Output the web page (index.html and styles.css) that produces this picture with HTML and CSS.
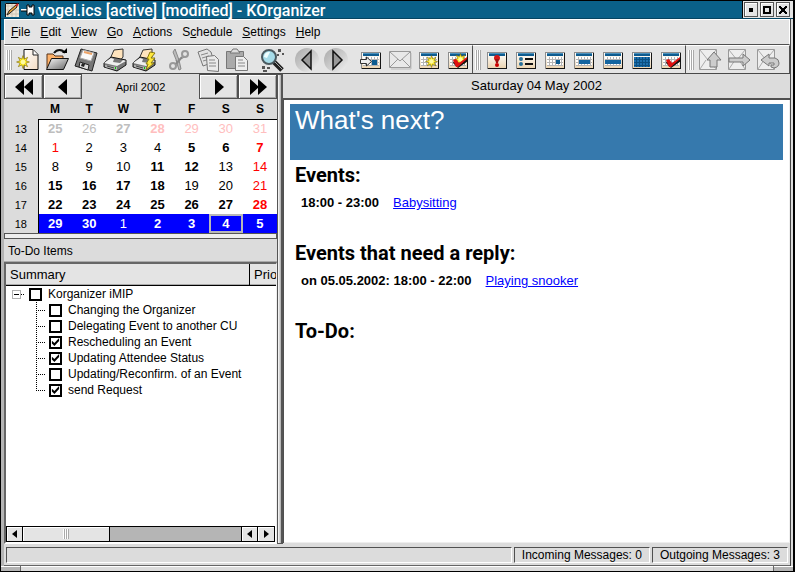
FILE: index.html
```html
<!DOCTYPE html>
<html lang="en">
<head>
<meta charset="utf-8">
<title>vogel.ics [active] [modified] - KOrganizer</title>
<link rel="stylesheet" href="styles.css">
</head>
<body>
<svg class="defs" aria-hidden="true">
  <defs>
    <linearGradient id="paper" x1="0" y1="0" x2="1" y2="1"><stop offset="0" stop-color="#fff"/><stop offset="1" stop-color="#f3dcc4"/></linearGradient>
    <linearGradient id="metal" x1="0" y1="0" x2="1" y2="1"><stop offset="0" stop-color="#f8f8f8"/><stop offset="1" stop-color="#666"/></linearGradient>
    <linearGradient id="disc" x1="0" y1="0" x2="1" y2="1"><stop offset="0" stop-color="#a9a9a9"/><stop offset=".6" stop-color="#d2d2d2"/><stop offset="1" stop-color="#f4f4f4"/></linearGradient>
    <linearGradient id="beige" x1="0" y1="0" x2="0" y2="1"><stop offset="0" stop-color="#fff"/><stop offset="1" stop-color="#ecd5b2"/></linearGradient>
    <pattern id="cells" width="3" height="3" patternUnits="userSpaceOnUse" x="4" y="9"><rect width="3" height="3" fill="#b5b5b5"/><rect width="2" height="2" fill="#fff"/></pattern>
    <pattern id="bluecells" width="3" height="3" patternUnits="userSpaceOnUse" x="4" y="9"><rect width="3" height="3" fill="#0b4f80"/><rect width="2" height="2" fill="#1c70ae"/></pattern>
    <symbol id="card" viewBox="0 0 24 24">
      <path d="M2 4h20v17H2z" fill="#8d8d8d"/><path d="M3 21V20h18V5h1v16z" fill="#151515"/>
      <path d="M3 5h18v15H3z" fill="url(#beige)"/><path d="M4 5h16v3H4z" fill="#0e5c90"/><path d="M4 5h16v1H4z" fill="#4b91bd"/>
    </symbol>
    <symbol id="cal" viewBox="0 0 24 24"><use href="#card"/><path d="M4 9h16v9H4z" fill="url(#cells)"/></symbol>
    <symbol id="tick" viewBox="0 0 24 24"><path d="M8 13l4 5 10-9v4L12 20l-5-5z" fill="#111"/><path d="M7 12l3-1 3 4 8-6v2l-9 8h-2z" fill="#df1010"/></symbol>
    <symbol id="star" viewBox="0 0 24 24"><path d="M12 1l2 6 6-3-3 6 6 2-6 2 3 6-6-3-2 6-2-6-6 3 3-6-6-2 6-2-3-6 6 3z" fill="#ffec28" stroke="#776300" stroke-width="1"/><circle cx="12" cy="12" r="4" fill="#fffba0"/></symbol>
    <symbol id="printer" viewBox="0 0 24 24">
      <path d="M7 11l4-9 9-1v8l-4 5z" fill="#ffe4bd" stroke="#333"/><path d="M1 15l7-6 15 3v5l-9 6-13-4z" fill="#777" stroke="#161616"/>
      <path d="M1 15l7-5 3 1-1 3 7 1 3-3 3 1-9 5z" fill="#efefef"/><path d="M2 17l12 2v3L2 19z" fill="#b3b3b3"/><path d="M4 18l7 2" stroke="#444"/><path d="M12 20h1" stroke="#0c0" stroke-width="2"/>
    </symbol>
    <symbol id="mail" viewBox="0 0 24 24"><path d="M1.500 1.500h17v20h-17z" fill="#eee" stroke="#999"/><path d="M2 2l8 10 8-10M2 21l6-9M18 21l-6-9" fill="none" stroke="#aaa"/></symbol>
  </defs>
</svg>
<div class="window">
  <header class="titlebar">
    <svg class="appicon" viewBox="0 0 32 16" aria-hidden="true"><path d="M0 1h14v14H0z" fill="#eee7d8"/><path d="M0 4h14M0 8h14M0 12h14M3 1v14M7 1v14M11 1v14" stroke="#cfc6b5"/><path d="M.5 15V1.500H14" fill="none" stroke="#111"/><path d="M2 13l2-4 7-6 1 2-7 6z" fill="#f0a938" stroke="#222"/><path d="M11 4l2-2" stroke="#c22" stroke-width="2"/><path d="M16 8h7" stroke="#fff" stroke-width="2"/><path d="M16 9h6" stroke="#000"/><path d="M22 3h2v2h3V3h2v10h-2v-2h-3v2h-2z" fill="#fff" stroke="#000"/></svg>
    <h1>vogel.ics [active] [modified] - KOrganizer</h1>
    <div class="winbuttons">
      <button aria-label="Minimize"><svg viewBox="0 0 12 12"><path d="M4 4h4v4H4z"/></svg></button>
      <button aria-label="Maximize"><svg viewBox="0 0 12 12"><path d="M2 2h8v8H2zM4 4v4h4V4z" fill-rule="evenodd"/></svg></button>
      <button aria-label="Close"><svg viewBox="0 0 12 12"><path d="M2 2h2v1h1v1h2V3h1V2h2v2H9v1H8v2h1v1h1v2H8V9H7V8H5v1H4v1H2V8h1V7h1V5H3V4H2z"/></svg></button>
    </div>
  </header>
  <div class="client">
    <nav class="menubar">
      <a href="#"><u>F</u>ile</a><a href="#"><u>E</u>dit</a><a href="#"><u>V</u>iew</a><a href="#"><u>G</u>o</a><a href="#"><u>A</u>ctions</a><a href="#">S<u>c</u>hedule</a><a href="#"><u>S</u>ettings</a><a href="#"><u>H</u>elp</a>
    </nav>
    <div class="toolbars">
      <div class="toolbar" role="toolbar" aria-label="Main">
        <i class="grip"></i>
        <div class="set">
          <button aria-label="New"><svg viewBox="0 0 24 24"><path d="M8 1.500h9l5 5v15H8z" fill="url(#paper)" stroke="#111"/><path d="M17 2v5h5" fill="#fff" stroke="#222"/><use href="#star" x="0" y="7" width="14" height="14"/></svg></button>
          <button aria-label="Open"><svg viewBox="0 0 24 24"><path d="M2 20V6h6l2 2h8v5z" fill="#ffb36b" stroke="#563319"/><path d="M1.500 21.500l5-11h17l-5 11z" fill="url(#metal)" stroke="#111"/><path d="M9 5c3-4 8-4 11 0" fill="none" stroke="#111" stroke-width="2"/><path d="M17 5h5V0z"/></svg></button>
          <button aria-label="Save"><svg viewBox="0 0 24 24"><path d="M7 1l16 4-5 18-17-5z" fill="#777" stroke="#222"/><path d="M9 2l11 3-3 8-11-3z" fill="#fafafa" stroke="#aaa"/><path d="M10 4l8 2" stroke="#eda468" stroke-width="2"/><path d="M6 14l9 3-1 5-9-3z" fill="#ddd" stroke="#222"/><path d="M8 15l3 1-1 3-3-1z" fill="#222"/></svg></button>
          <button aria-label="Print"><svg viewBox="0 0 24 24"><use href="#printer"/></svg></button>
          <button aria-label="Print preview"><svg viewBox="0 0 24 24"><use href="#printer"/><path d="M18 4l5 1-4 5h4l-4 5h3l-8 7 2-6h-2l3-5h-2z" fill="#ffe83d" stroke="#8a7a10"/></svg></button>
        </div>
        <div class="set">
          <button aria-label="Cut" disabled><svg viewBox="0 0 24 24"><path d="M12 12L8 1 6 4l4 10M11 12l9-4M9 12l3 10 2-1-2-9" fill="#bbb" stroke="#888"/><circle cx="6" cy="18" r="3" fill="none" stroke="#999" stroke-width="2"/><circle cx="18" cy="6" r="3" fill="none" stroke="#999" stroke-width="2"/><path d="M9 16l6-7" stroke="#888" stroke-width="2"/></svg></button>
          <button aria-label="Copy" disabled><svg viewBox="0 0 24 24"><path d="M2 4l9-3 4 3 3 10-11 4z" fill="#e2e2e2" stroke="#777"/><path d="M5 7l7-2M6 10l7-2M7 13l7-2" stroke="#888"/><path d="M10.500 8.500l8-1 4 4v12l-11-1z" fill="#eaeaea" stroke="#777"/><path d="M13 12h6M13 15h7M13 18h7" stroke="#888"/></svg></button>
          <button aria-label="Paste" disabled><svg viewBox="0 0 24 24"><path d="M1.500 3.500h17v17h-17z" fill="#aaa" stroke="#777"/><path d="M5 5l3-4h4l3 4z" fill="#ddd" stroke="#777"/><path d="M10.500 8.500h8l4 4v10h-12z" fill="#eee" stroke="#777"/><path d="M13 12h5M13 15h7M13 18h7" stroke="#888"/></svg></button>
        </div>
        <div class="set">
          <button aria-label="Find"><svg viewBox="0 0 24 24"><path d="M18 1h3v3h-3zM22 5h2v2h-2zM17 6h2v2h-2zM2 18h3v3H2zM7 19h3v2H7zM3 22h4v2H3z" fill="#555"/><path d="M14 14l8 8" stroke="#222" stroke-width="5"/><path d="M15 14l7 7" stroke="#aaa"/><circle cx="9" cy="9" r="7" fill="#a7dce9" stroke="#4b5a60" stroke-width="2"/><path d="M4 9a5 5 0 0 1 6-5l-3 6z" fill="#f0ffff"/></svg></button>
        </div>
        <div class="set">
          <button aria-label="Back"><svg viewBox="0 0 24 24"><circle cx="12" cy="12" r="12" fill="url(#disc)"/><path d="M7 12l9-9v18z" fill="#999" stroke="#111" stroke-width="1.500"/></svg></button>
          <button aria-label="Forward"><svg viewBox="0 0 24 24"><circle cx="12" cy="12" r="12" fill="url(#disc)"/><path d="M18 12L9 3v18z" fill="#999" stroke="#111" stroke-width="1.500"/></svg></button>
        </div>
        <div class="set">
          <button aria-label="Go to today"><svg viewBox="0 0 24 24"><use href="#cal"/><path d="M13 12h5v5h-5z" fill="#0e5c90"/><path d="M1.500 11.500h6V9l5 4.500-5 4.500v-2.500h-6z" fill="#eee" stroke="#333"/></svg></button>
          <button aria-label="Send mail" disabled><svg viewBox="0 0 24 24"><path d="M1.500 3.500h21v16h-21z" fill="#e9e9e9" stroke="#999"/><path d="M2 4l10 9L22 4M2 19l8-8M22 19l-8-8" fill="none" stroke="#999"/><path d="M3 21h20V5" fill="none" stroke="#bbb"/></svg></button>
          <button aria-label="New event"><svg viewBox="0 0 24 24"><use href="#cal"/><use href="#star" x="8" y="7" width="13" height="13"/></svg></button>
          <button aria-label="New to-do"><svg viewBox="0 0 24 24"><use href="#cal"/><use href="#star" x="8" y="5" width="13" height="13"/><use href="#tick"/></svg></button>
        </div>
      </div>
      <div class="toolbar" role="toolbar" aria-label="Views">
        <i class="grip"></i>
        <div class="set">
          <button aria-label="What's next"><svg viewBox="0 0 24 24"><use href="#card"/><circle cx="12" cy="10" r="3" fill="#d41616"/><path d="M10 11h4l-1 4h-2z" fill="#a01010"/><circle cx="12" cy="17" r="2" fill="#c00"/></svg></button>
          <button aria-label="List"><svg viewBox="0 0 24 24"><use href="#card"/><circle cx="7" cy="11" r="2" fill="#287099"/><circle cx="7" cy="16" r="2" fill="#287099"/><path d="M11 11h8M11 16h8" stroke="#111" stroke-width="2"/></svg></button>
          <button aria-label="Day"><svg viewBox="0 0 24 24"><use href="#cal"/><path d="M13 12h4v4h-4z" fill="#0e5c90"/></svg></button>
          <button aria-label="Work week"><svg viewBox="0 0 24 24"><use href="#cal"/><path d="M7 12h11v4H7z" fill="#1465a0"/></svg></button>
          <button aria-label="Week"><svg viewBox="0 0 24 24"><use href="#cal"/><path d="M4 12h16v4H4z" fill="#1465a0"/></svg></button>
          <button aria-label="Month"><svg viewBox="0 0 24 24"><use href="#card"/><path d="M4 9h16v10H4z" fill="url(#bluecells)"/></svg></button>
          <button aria-label="To-do list"><svg viewBox="0 0 24 24"><use href="#cal"/><use href="#tick"/></svg></button>
        </div>
      </div>
      <div class="toolbar" role="toolbar" aria-label="Schedule">
        <i class="grip"></i>
        <div class="set">
          <button aria-label="Publish" disabled><svg viewBox="0 0 24 24"><use href="#mail"/><path d="M12 19v-7H9l7-8 7 8h-4v7z" fill="#ccc" stroke="#777"/></svg></button>
          <button aria-label="Request" disabled><svg viewBox="0 0 24 24"><use href="#mail"/><path d="M2 10h14V6l7 6-7 6v-4H2z" fill="#ccc" stroke="#777"/></svg></button>
          <button aria-label="Reply" disabled><svg viewBox="0 0 24 24"><use href="#mail"/><path d="M5 12l8-6v4h6q4 1 4 5t-5 5l-3-1v-2h3v-2h-5v3z" fill="#ccc" stroke="#777"/></svg></button>
        </div>
      </div>
    </div>
    <main class="panes">
      <aside class="side">
        <div class="monthnav">
          <button aria-label="Previous year"><svg viewBox="0 0 22 16"><path d="M11 0v16L2 8zM20 0v16l-9-8z"/></svg></button>
          <button aria-label="Previous month"><svg viewBox="0 0 22 16"><path d="M15 0v16L6 8z"/></svg></button>
          <span>April 2002</span>
          <button aria-label="Next month"><svg viewBox="0 0 22 16"><path d="M7 0v16l9-8z"/></svg></button>
          <button aria-label="Next year"><svg viewBox="0 0 22 16"><path d="M3 0v16l9-8zM11 0v16l9-8z"/></svg></button>
        </div>
        <table class="month">
          <thead><tr><td></td><th>M</th><th>T</th><th>W</th><th>T</th><th>F</th><th>S</th><th>S</th></tr></thead>
          <tbody>
            <tr><th>13</th><td class="dim b">25</td><td class="dim">26</td><td class="dim b">27</td><td class="pink b">28</td><td class="pink">29</td><td class="pink">30</td><td class="pink">31</td></tr>
            <tr><th>14</th><td class="red">1</td><td>2</td><td>3</td><td>4</td><td class="b">5</td><td class="b">6</td><td class="red b">7</td></tr>
            <tr><th>15</th><td>8</td><td>9</td><td>10</td><td class="b">11</td><td class="b">12</td><td>13</td><td class="red">14</td></tr>
            <tr><th>16</th><td class="b">15</td><td class="b">16</td><td class="b">17</td><td class="b">18</td><td>19</td><td>20</td><td class="red">21</td></tr>
            <tr><th>17</th><td class="b">22</td><td class="b">23</td><td class="b">24</td><td class="b">25</td><td class="b">26</td><td class="b">27</td><td class="red b">28</td></tr>
            <tr class="selected"><th>18</th><td class="b">29</td><td class="b">30</td><td>1</td><td class="b">2</td><td class="b">3</td><td class="b today">4</td><td class="b">5</td></tr>
          </tbody>
        </table>
        <div class="hsplit"></div>
        <h2 class="todotitle">To-Do Items</h2>
        <div class="todobox">
          <div class="cols"><span>Summary</span><span>Prio</span></div>
          <ul class="tree">
            <li><div class="root"><i class="expander"></i><label><input type="checkbox">Korganizer iMIP</label></div>
              <ul>
                <li><label><input type="checkbox">Changing the Organizer</label></li>
                <li><label><input type="checkbox">Delegating Event to another CU</label></li>
                <li><label><input type="checkbox" checked>Rescheduling an Event</label></li>
                <li><label><input type="checkbox" checked>Updating Attendee Status</label></li>
                <li><label><input type="checkbox">Updating/Reconfirm. of an Event</label></li>
                <li><label><input type="checkbox" checked>send Request</label></li>
              </ul>
            </li>
          </ul>
          <div class="scroll">
            <button aria-label="Scroll left"><svg viewBox="0 0 8 8"><path d="M6 0v8L1 4z"/></svg></button>
            <div class="track"><div class="thumb"><i class="grip"></i></div></div>
            <button aria-label="Page left"><svg viewBox="0 0 8 8"><path d="M6 0v8L1 4z"/></svg></button>
            <button aria-label="Scroll right"><svg viewBox="0 0 8 8"><path d="M2 0v8l5-4z"/></svg></button>
          </div>
        </div>
      </aside>
      <div class="vsplit"></div>
      <section class="content">
        <div class="date">Saturday 04 May 2002</div>
        <article class="page">
          <h2 class="banner">What's next?</h2>
          <h3>Events:</h3>
          <p><b>18:00 - 23:00</b><a href="#">Babysitting</a></p>
          <h3>Events that need a reply:</h3>
          <p><b>on 05.05.2002: 18:00 - 22:00</b><a href="#">Playing snooker</a></p>
          <h3>To-Do:</h3>
        </article>
      </section>
    </main>
    <footer class="status"><span></span><span>Incoming Messages: 0</span><span>Outgoing Messages: 3</span></footer>
  </div>
  <div class="resize"><i></i><i></i><i></i></div>
</div>
</body>
</html>
```
FILE: styles.css
```css
* { box-sizing: border-box; }
body { margin: 0; background: #000; color: #000; font: 13px/16px "Liberation Sans", Arial, sans-serif; }
h1, h2, h3, p, ul { margin: 0; padding: 0; }
ul { list-style: none; }
button { margin: 0; padding: 0; font: inherit; color: inherit; background: #e4e4e4; border: 0; }
svg { display: block; }
.defs { position: absolute; width: 0; height: 0; }

.window { display: flex; flex-direction: column; height: 100vh; padding: 1px 2px 1px 1px; }
.titlebar { display: flex; align-items: center; flex: none; height: 18px; padding-left: 4px; background: #0a6088; border-bottom: 1px solid #064562; color: #fff; }
.appicon { width: 32px; height: 16px; margin-right: 1px; }
.titlebar h1 { flex: 1; padding-top: 2px; font: 500 16px/18px Roboto, "Liberation Sans", sans-serif; white-space: nowrap; }
.winbuttons { display: flex; align-items: center; gap: 2px; align-self: stretch; padding: 0 3px 0 1px; background: #e4e4e4; border-left: 1px solid #000; }
.winbuttons button { width: 14px; height: 15px; border: 1px solid #555; box-shadow: inset 1px 1px #fff; }
.winbuttons svg { width: 12px; height: 12px; }

.client { flex: 1; min-height: 0; display: flex; flex-direction: column; background: #dcdcdc; border-left: 3px solid; border-right: 2px solid #d8d8d8; border-image: linear-gradient(#0a6088 22px, #b4b4b4 22px) 1; border-image-width: 0 0 0 3px; box-shadow: inset -1px 0 #444; padding-right: 1px; }
.menubar { display: flex; flex: none; gap: 10px; height: 26px; padding: 4px 6px; background: #e4e4e4; border: 1px solid #fff; border-bottom-color: #505050; font-size: 12px; }
.menubar a { color: #000; text-decoration: none; }

.toolbars { display: flex; flex: none; height: 29px; border-bottom: 1px solid #484848; background: #e4e4e4; }
.toolbar { display: flex; gap: 6px; align-items: center; padding-left: 2px; border-top: 1px solid #fff; border-right: 1px solid #505050; }
.toolbar:last-child { flex: 1; }
.toolbar .grip { margin-right: -5px; }
.grip { width: 6px; height: 20px; background: repeating-linear-gradient(90deg, #fff 0 1px, #aaa 1px 2px); }
.set { display: flex; }
.set button { display: grid; place-items: center; width: 29px; height: 27px; }
.set svg { width: 24px; height: 24px; }

.panes { flex: 1; min-height: 0; display: flex; }
.side { flex: none; width: 273px; display: flex; flex-direction: column; }
.monthnav { display: flex; height: 25px; font-size: 11px; }
.monthnav span { flex: 1; text-align: center; line-height: 26px; }
.monthnav button { display: grid; place-items: center; width: 39px; border: 1px solid #505050; box-shadow: inset 1px 1px #fff, inset -1px -1px #aaa; }
.monthnav svg { width: 22px; height: 16px; }
.month { width: 100%; table-layout: fixed; border-collapse: collapse; text-align: center; }
.month td, .month th { padding: 0; height: 19px; line-height: 16px; }
.month thead td { width: 34px; }
.month thead th { height: 20px; font-size: 12px; font-weight: 700; border-bottom: 1px solid #000; }
.month tbody td { background: #fff; }
.month tbody th { font-weight: 400; font-size: 11px; border-right: 1px solid #000; }
.month .b { font-weight: 700; }
.month .dim { color: #bebebe; }
.month .pink { color: #ffbebe; }
.month .red { color: #f00; }
.month .selected td { background: #00f; color: #fff; }
.month .selected .today { box-shadow: inset 0 0 0 2px #b8b8b8; }
.hsplit { flex: none; height: 6px; border: 1px solid #555; background: #eee; }
.todotitle { flex: none; height: 23px; padding: 4px; font: inherit; font-size: 12px; border-bottom: 1px solid #aaa; }
.todobox { flex: 1; min-height: 0; display: flex; flex-direction: column; border: 2px solid #666; border-right: 1px solid #eee; border-bottom: 2px solid #fff; background: #fff; margin-bottom: 2px; font-size: 12px; }
.cols { display: flex; flex: none; height: 22px; border-bottom: 1px solid #000; background: #e4e4e4; box-shadow: inset 0 -1px #aaa; font-size: 13px; line-height: 21px; }
.cols span { padding-left: 4px; overflow: hidden; }
.cols span:first-child { flex: 1; border-right: 1px solid #000; }
.cols span:last-child { width: 26px; }
.tree { flex: 1; }
.tree label { display: flex; align-items: center; gap: 6px; height: 16px; white-space: nowrap; }
.tree input { appearance: none; flex: none; width: 13px; height: 13px; margin: 0; border: 2px solid #000; background: #fff; }
.tree input:checked::before { content: ""; display: block; width: 9px; height: 9px; background: #000; clip-path: polygon(10% 35%, 38% 60%, 90% 5%, 90% 38%, 38% 95%, 10% 68%); }
.root { display: flex; align-items: center; padding-left: 6px; }
.expander { width: 9px; height: 9px; border: 1px solid #b0b0b0; background: linear-gradient(#000, #000) 1px 3px / 5px 1px no-repeat; }
.expander + label::before { content: ""; width: 4px; height: 1px; margin-right: -2px; background: repeating-linear-gradient(90deg, #000 0 1px, transparent 1px 2px); }
.tree ul { margin-left: 30px; }
.tree ul li { padding-left: 13px; background: repeating-linear-gradient(#000 0 1px, transparent 1px 2px) 0 0 / 1px 100% no-repeat, repeating-linear-gradient(90deg, #000 0 1px, transparent 1px 2px) 0 8px / 9px 1px no-repeat; }
.tree ul li:last-child { background-size: 1px 8px, 9px 1px; }
.scroll { display: flex; flex: none; height: 16px; margin-right: 1px; border: 1px solid #000; }
.scroll button { display: grid; place-items: center; width: 16px; border-right: 1px solid #000; box-shadow: inset 1px 1px #fff; }
.scroll button:last-child { border-right: 0; }
.scroll button svg { width: 8px; height: 8px; }
.track { flex: 1; background: #b5b5b5; border-right: 1px solid #000; }
.thumb { display: grid; place-items: center; width: 40%; height: 14px; background: #e4e4e4; border-right: 1px solid #000; box-shadow: inset 1px 1px #fff; }
.thumb .grip { height: 10px; }

.vsplit { flex: none; width: 6px; margin-bottom: 2px; border: solid #555; border-width: 1px 2px 1px 1px; background: linear-gradient(90deg, #fff, #aaa); }
.content { flex: 1; display: flex; flex-direction: column; min-width: 0; }
.date { flex: none; height: 24px; padding: 4px 0; text-align: center; }
.page { flex: 1; margin-bottom: 3px; padding: 4px 7px 4px 6px; background: #fff; border: 1px solid #505050; border-width: 2px 0 0 1px; box-shadow: inset -1px -1px #eee; }
.banner { height: 56px; padding: 1px 5px; background: #3679ad; color: #fff; font-size: 26px; line-height: 30px; font-weight: 400; }
.page h3 { padding: 3px 5px; font: 700 20px/24px Roboto, "Liberation Sans", sans-serif; }
.page p { display: flex; gap: 14px; height: 48px; padding: 5px 11px; }
.page a { color: #00f; }

.status { display: flex; flex: none; gap: 2px; height: 20px; padding: 1px 2px 2px; border-bottom: 1px solid #666; font-size: 12px; }
.status span { padding: 0 7px; line-height: 15px; border: 1px solid; border-color: #505050 #fff #fff #505050; white-space: nowrap; }
.status span:first-child { flex: 1; }
.resize { display: flex; flex: none; height: 5px; background: #666; gap: 1px; }
.resize i { width: 19px; background: #b4b4b4; border-top: 1px solid #fff; }
.resize i:nth-child(2) { flex: 1; background: #dcdcdc; }
```
